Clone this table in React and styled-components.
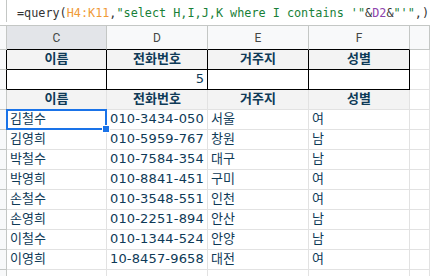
import styled, { createGlobalStyle } from 'styled-components';

const GlobalStyle = createGlobalStyle`
    body {
        margin: 0;
        background: #ffffff;
        font-family: 'DejaVu Sans', 'Noto Sans CJK KR', sans-serif;
        overflow: hidden;
    }
`;

const columns = '7px 100px 101px 101px 101px 1fr';
const gridLine = '#e2e2e2';
const headLine = '#c4c7c5';
const textColor = '#0e3a57';

const FormulaBar = styled.div`
    display: flex;
    align-items: flex-start;
    height: 26px;
    box-sizing: border-box;
    border-bottom: 1px solid ${headLine};
    background: #ffffff;
`;

const FxSlot = styled.div`
    width: 7px;
    height: 22px;
    border-right: 1px solid ${headLine};
    box-sizing: border-box;
`;

const Formula = styled.div`
    padding-left: 10px;
    font-family: 'DejaVu Sans Mono', 'Liberation Mono', monospace;
    font-size: 11.8px;
    line-height: 26px;
    height: 25px;
    color: #333333;
    white-space: nowrap;
    overflow: hidden;

    .ref {
        color: #f09a37;
    }
    .str {
        color: #188038;
    }
    .ref2 {
        color: #8e44ad;
    }
`;

const Row = styled.div`
    display: grid;
    grid-template-columns: ${columns};
    height: ${(props) => props.$height || 20}px;
`;

const ColHead = styled.div`
    box-sizing: border-box;
    background: ${(props) => (props.$active ? '#e3e5e9' : '#f8f9fa')};
    border-right: 1px solid ${headLine};
    border-bottom: 1px solid ${(props) => props.$bottom || headLine};
    display: flex;
    align-items: center;
    justify-content: center;
    font-family: Roboto, 'Liberation Sans', sans-serif;
    font-size: 12px;
    color: #444746;
`;

const RowHead = styled.div`
    box-sizing: border-box;
    background: #f8f9fa;
    border-right: 1px solid ${(props) => props.$right || headLine};
    border-bottom: 1px solid ${headLine};
`;

const Cell = styled.div`
    position: relative;
    box-sizing: border-box;
    border-right: 1px solid ${(props) => props.$right || gridLine};
    border-bottom: 1px solid ${(props) => props.$bottom || gridLine};
    background: ${(props) => (props.$head ? '#f3f3f3' : '#ffffff')};
    display: flex;
    align-items: flex-end;
    justify-content: ${(props) =>
        props.$align === 'center' ? 'center' : props.$align === 'right' ? 'flex-end' : 'flex-start'};
    padding: 0 3px 2px 3px;
    font-size: 13px;
    line-height: 16px;
    font-weight: ${(props) => (props.$head ? 'bold' : 'normal')};
    color: ${textColor};
    white-space: nowrap;
    overflow: hidden;
`;

const Phone = styled(Cell)`
    letter-spacing: 0.15px;
`;

const Selection = styled.div`
    position: absolute;
    left: -1px;
    top: -1px;
    right: -1px;
    bottom: -1px;
    border: 2px solid #1a73e8;
    pointer-events: none;
`;

const SelCell = styled(Cell)`
    overflow: visible;
`;

const Handle = styled.div`
    position: absolute;
    right: -4px;
    bottom: -4px;
    width: 6px;
    height: 6px;
    background: #1a73e8;
    border: 1px solid #ffffff;
    z-index: 2;
`;

const headers = ['이름', '전화번호', '거주지', '성별'];

// 전화번호는 셀 너비만큼 보이는 부분
const people = [
    ['김철수', '010-3434-050', '서울', '여'],
    ['김영희', '010-5959-767', '창원', '남'],
    ['박철수', '010-7584-354', '대구', '남'],
    ['박영희', '010-8841-451', '구미', '여'],
    ['손철수', '010-3548-551', '인천', '여'],
    ['손영희', '010-2251-894', '안산', '남'],
    ['이철수', '010-1344-524', '안양', '남'],
    ['이영희', '10-8457-9658', '대전', '여'],
];

export default function App() {
    return (
        <>
            <GlobalStyle />
            <FormulaBar>
                <FxSlot />
                <Formula>
                    =query(<span className="ref">H4:K11</span>,
                    <span className="str">"select H,I,J,K where I contains '"</span>&amp;
                    <span className="ref2">D2</span>&amp;<span className="str">"'"</span>,)
                </Formula>
            </FormulaBar>

            {/* 열 머리글 */}
            <Row $height={24}>
                <ColHead />
                <ColHead $active $bottom="#000">C</ColHead>
                <ColHead $bottom="#000">D</ColHead>
                <ColHead $bottom="#000">E</ColHead>
                <ColHead $bottom="#000">F</ColHead>
                <ColHead />
            </Row>

            {/* 검색 입력 영역 */}
            <Row>
                <RowHead $right="#000" />
                {headers.map((h) => (
                    <Cell key={h} $head $align="center" $right="#000" $bottom="#000">
                        {h}
                    </Cell>
                ))}
                <Cell />
            </Row>
            <Row>
                <RowHead $right="#000" />
                <Cell $right="#000" $bottom="#000" />
                <Cell $right="#000" $bottom="#000" $align="right">
                    5
                </Cell>
                <Cell $right="#000" $bottom="#000" />
                <Cell $right="#000" $bottom="#000" />
                <Cell />
            </Row>

            {/* 결과 */}
            <Row>
                <RowHead />
                {headers.map((h) => (
                    <Cell key={h} $head $align="center">
                        {h}
                    </Cell>
                ))}
                <Cell />
            </Row>
            {people.map((p, i) => (
                <Row key={p[0]}>
                    <RowHead />
                    {i === 0 ? (
                        <SelCell>
                            {p[0]}
                            <Selection />
                            <Handle />
                        </SelCell>
                    ) : (
                        <Cell>{p[0]}</Cell>
                    )}
                    <Phone>{p[1]}</Phone>
                    <Cell>{p[2]}</Cell>
                    <Cell>{p[3]}</Cell>
                    <Cell />
                </Row>
            ))}
            <Row>
                <RowHead />
                <Cell />
                <Cell />
                <Cell />
                <Cell />
                <Cell />
            </Row>
        </>
    );
}
